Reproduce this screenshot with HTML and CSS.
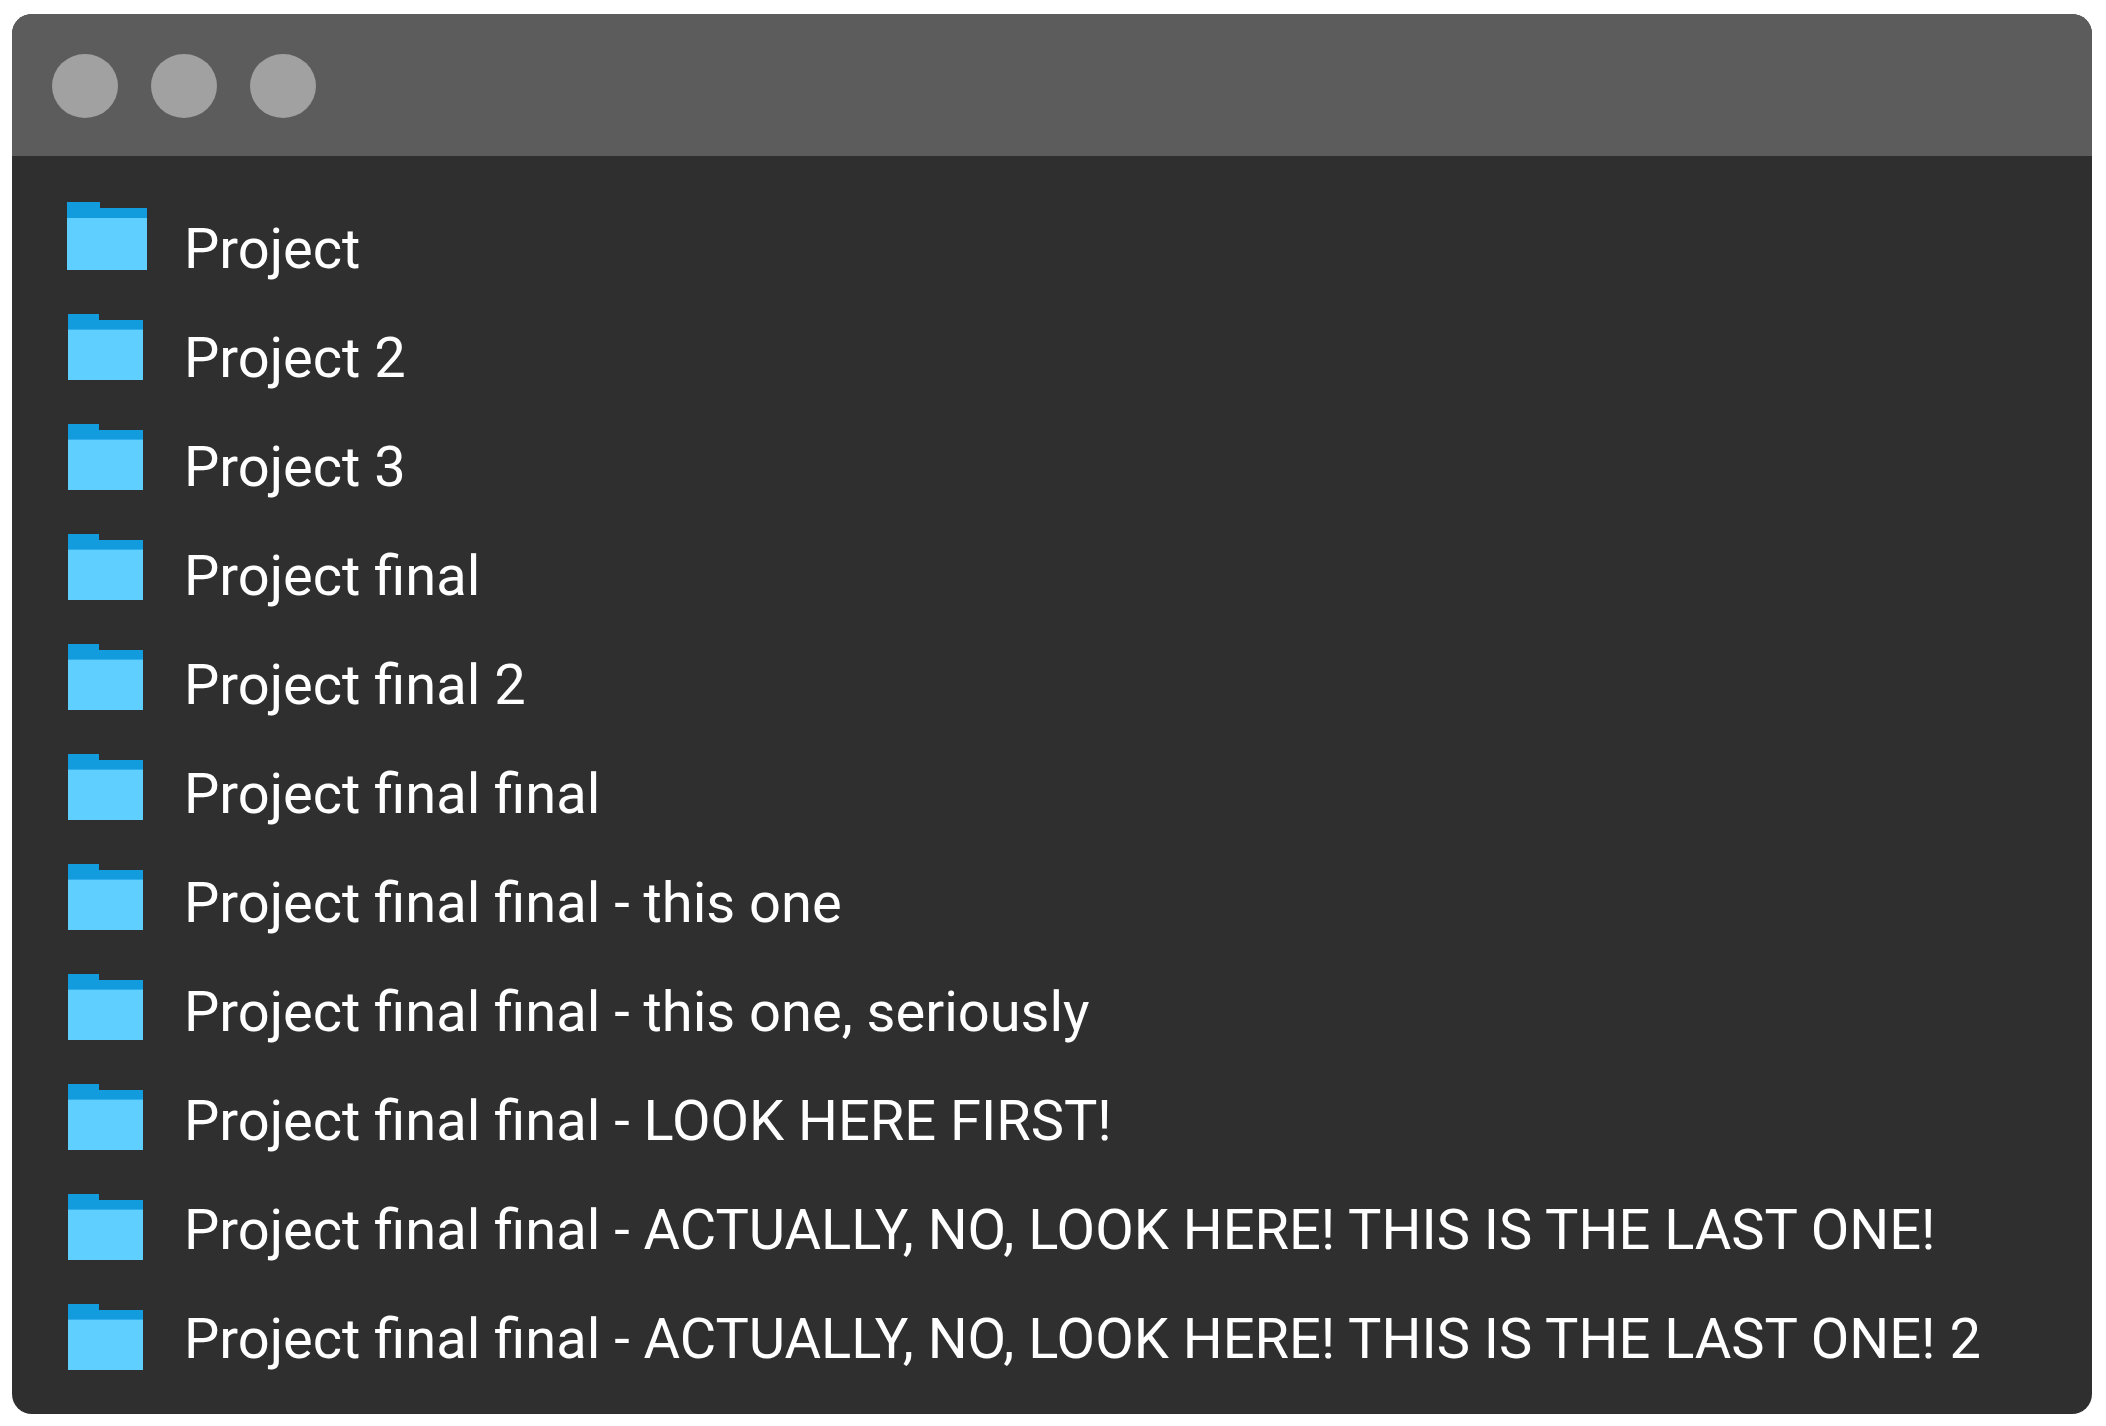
FILE: index.html
```html
<!DOCTYPE html>
<html lang="en">
<head>
<meta charset="utf-8">
<meta name="viewport" content="width=device-width, initial-scale=1">
<title>Project folders</title>
<link rel="stylesheet" href="styles.css">
</head>
<body>
<svg class="defs" aria-hidden="true">
  <symbol id="folder" viewBox="0 0 75 66">
    <path fill="#129bdd" d="M0 0h31v6h44v12H0z"/>
    <path fill="#5fcfff" d="M0 16h75v50H0z"/>
    <path fill="#30aeeb" d="M0 15h75v1H0z"/>
  </symbol>
  <symbol id="folder-large" viewBox="0 0 80 68">
    <path fill="#129bdd" d="M0 0h33v6h47v12H0z"/>
    <path fill="#5fcfff" d="M0 16h80v52H0z"/>
  </symbol>
</svg>
<main class="window">
  <header class="titlebar">
    <button class="control" type="button" aria-label="Close"></button>
    <button class="control" type="button" aria-label="Minimize"></button>
    <button class="control" type="button" aria-label="Zoom"></button>
  </header>
  <div class="content">
    <div class="icons" aria-hidden="true">
      <svg class="folder folder-large"><use href="#folder-large"/></svg>
      <svg class="folder"><use href="#folder"/></svg>
      <svg class="folder"><use href="#folder"/></svg>
      <svg class="folder"><use href="#folder"/></svg>
      <svg class="folder"><use href="#folder"/></svg>
      <svg class="folder"><use href="#folder"/></svg>
      <svg class="folder"><use href="#folder"/></svg>
      <svg class="folder"><use href="#folder"/></svg>
      <svg class="folder"><use href="#folder"/></svg>
      <svg class="folder"><use href="#folder"/></svg>
      <svg class="folder"><use href="#folder"/></svg>
    </div>
    <ul class="names">
      <li>Project</li>
      <li>Project 2</li>
      <li>Project 3</li>
      <li>Project final</li>
      <li>Project final 2</li>
      <li>Project final final</li>
      <li>Project final final - this one</li>
      <li>Project final final - this one, seriously</li>
      <li>Project final final - LOOK HERE FIRST!</li>
      <li>Project final final - ACTUALLY, NO, LOOK HERE! THIS IS THE LAST ONE!</li>
      <li>Project final final - ACTUALLY, NO, LOOK HERE! THIS IS THE LAST ONE! 2</li>
    </ul>
  </div>
</main>
</body>
</html>
```
FILE: styles.css
```css
body {
  margin: 14px 14px 12px 12px;
  background: #fff;
  font-family: Roboto, "Liberation Sans", sans-serif;
}

.defs {
  display: none;
}

.window {
  overflow: hidden;
  border-radius: 20px;
  background: #2f2f2f;
  color: #fff;
}

.titlebar {
  display: flex;
  gap: 33px;
  padding: 40px 40px 38px;
  background: #5c5c5c;
}

.control {
  width: 66px;
  height: 64px;
  padding: 0;
  border: 0;
  border-radius: 50%;
  background: #a1a1a1;
}

.content {
  display: grid;
  grid-template-columns: 80px 1fr;
  column-gap: 37px;
  padding: 39px 55px 20px;
}

.icons {
  display: flex;
  flex-direction: column;
  gap: 44px;
  padding-top: 7px;
}

.folder {
  width: 75px;
  height: 66px;
  margin-left: 1px;
}

.folder-large {
  width: 80px;
  height: 68px;
  margin-left: 0;
}

.names {
  margin: 0;
  padding: 0;
  list-style: none;
  font-size: 56px;
  line-height: 109px;
  white-space: nowrap;
}
```
